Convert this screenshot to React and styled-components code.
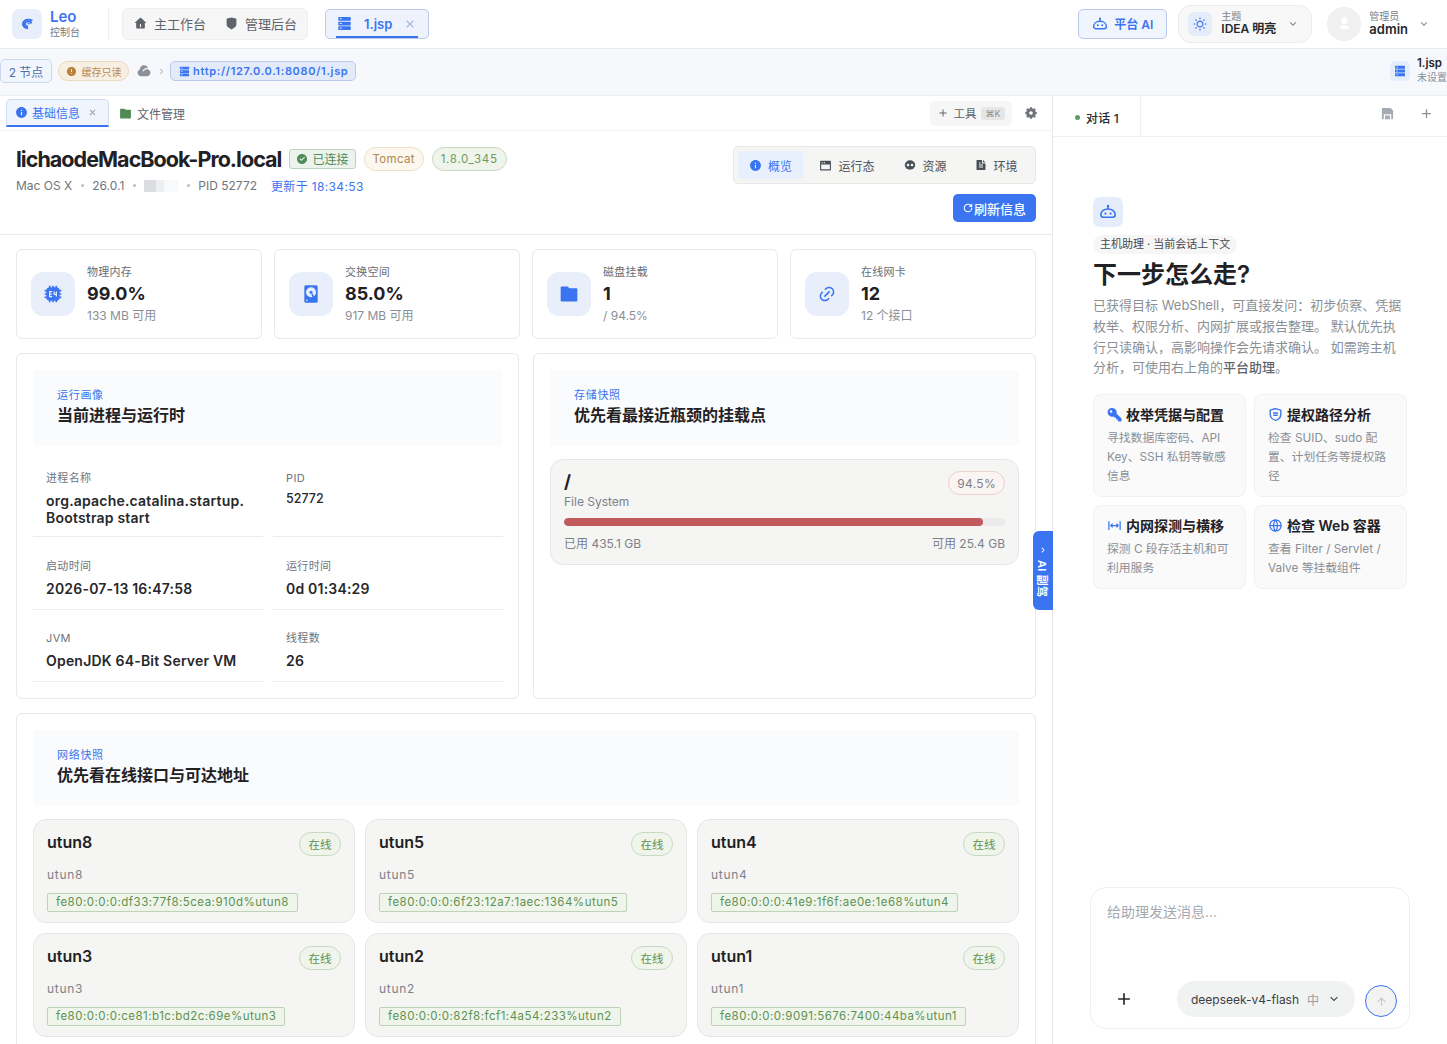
import React from "react";
import styled, { createGlobalStyle } from "styled-components";
import {
  RiHome4Fill, RiShieldFill, RiCloseLine, RiInformationFill, RiFolderFill,
  RiCloudFill, RiArrowRightSLine, RiArrowDownSLine, RiSettings5Fill, RiSaveFill, RiAddLine,
  RiCheckboxCircleFill, RiWindowFill, RiFileTextFill, RiSunLine,
  RiUser3Fill, RiArrowUpLine, RiLink, RiGlobalLine, RiErrorWarningFill,
} from "react-icons/ri";
import { RotateCw } from "lucide-react";

const BLUE = "#3b74f0";
const font = `Inter, "Noto Sans CJK SC", "Noto Sans", sans-serif`;

const GlobalStyle = createGlobalStyle`
  html, body { margin: 0; height: 100%; overflow: hidden; background: #fff; }
  body { font-family: ${font}; color: #1f2124; }
  * { box-sizing: border-box; }
`;

const RobotIcon = ({ size = 16 }) => (
  <svg width={size} height={size} viewBox="0 0 24 24" fill="none" stroke={BLUE} strokeWidth="2.2">
    <circle cx="12" cy="4" r="1.6" fill={BLUE} stroke="none" />
    <path d="M12 5v3" />
    <path d="M6 19c-2.2 0-3.6-1.4-3.6-3.3 0-4.4 4-7.7 9.6-7.7s9.6 3.3 9.6 7.7c0 1.9-1.4 3.3-3.6 3.3z" />
    <circle cx="8.6" cy="14" r="1.5" fill={BLUE} stroke="none" />
    <circle cx="15.4" cy="14" r="1.5" fill={BLUE} stroke="none" />
  </svg>
);

const LogoIcon = () => (
  <svg width="13" height="13" viewBox="0 0 24 24" fill="none" stroke={BLUE} strokeWidth="3.6">
    <path d="M21 7a11 9 0 0 0-17 3c-2 6 3 11 9 11" />
    <path d="M19 12a6 5 0 1 0-6 6" />
    <circle cx="14" cy="12" r="2" fill={BLUE} stroke="none" />
  </svg>
);

const ServerIcon = ({ size = 14, color = BLUE, hole = "#e8effb" }) => (
  <svg width={size} height={size} viewBox="0 0 24 24" style={{ flex: "none" }}>
    {[1.5, 9, 16.5].map((y) => (
      <g key={y}>
        <rect x="2" y={y} width="20" height="6" rx="1" fill={color} />
        <rect x="4.5" y={y + 2.2} width="3" height="1.6" fill={hole} />
      </g>
    ))}
  </svg>
);

const ChipIcon = () => (
  <svg width="20" height="20" viewBox="0 0 24 24">
    <path d="M7 2h2v2h2V2h2v2h2V2h2v2.2A3 3 0 0 1 19.8 7H22v2h-2v2h2v2h-2v2h2v2h-2.2A3 3 0 0 1 17 19.8V22h-2v-2h-2v2h-2v-2H9v2H7v-2.2A3 3 0 0 1 4.2 17H2v-2h2v-2H2v-2h2V9H2V7h2.2A3 3 0 0 1 7 4.2z" fill={BLUE} />
    <path d="M11 9H8v6h3M8 12h2.4M13.4 9v3.4h3M16 9v6" fill="none" stroke="#e8effb" strokeWidth="1.5" />
  </svg>
);

const HddIcon = () => (
  <svg width="20" height="20" viewBox="0 0 24 24">
    <rect x="4" y="1.5" width="16" height="21" rx="1.8" fill={BLUE} />
    <circle cx="12" cy="10" r="6" fill="#e8effb" />
    <circle cx="12" cy="10" r="1.8" fill={BLUE} />
    <path d="M13 12l3.5 6" stroke={BLUE} strokeWidth="1.8" />
    <circle cx="7" cy="19.5" r="1" fill="#e8effb" />
  </svg>
);

const PodIcon = () => (
  <svg width="12" height="12" viewBox="0 0 24 24">
    <ellipse cx="12" cy="12" rx="10.5" ry="9.5" fill="#4a5059" />
    <circle cx="8" cy="12" r="2.6" fill="#f5f5f4" />
    <circle cx="16" cy="12" r="2.6" fill="#f5f5f4" />
  </svg>
);

const KeyIcon = () => (
  <svg width="15" height="15" viewBox="0 0 24 24">
    <path fillRule="evenodd" fill={BLUE} d="M8.500 1.500a7 7 0 0 1 6.700 9l8 8v4.500h-4.700l-1.500-1.500v-2h-2.500v-2.500h-2l-2-2a7 7 0 1 1-2-13.500zM6.500 5a2 2 0 1 0 0 4 2 2 0 0 0 0-4z" />
  </svg>
);

const ShieldFaceIcon = () => (
  <svg width="15" height="15" viewBox="0 0 24 24" fill="none" stroke={BLUE} strokeWidth="2.2">
    <path d="M12 2.500l8.500 2.600v6.300c0 5-3.500 8.400-8.500 10.100-5-1.700-8.500-5.100-8.500-10.100V5.100z" />
    <path d="M8 9.500h8M8.500 13h7" strokeWidth="2.4" />
  </svg>
);

const SpanIcon = () => (
  <svg width="15" height="15" viewBox="0 0 24 24" fill="none" stroke={BLUE} strokeWidth="2">
    <path d="M3 5v14M21 5v14M6 12h12M9 9l-3 3 3 3M15 9l3 3-3 3" />
  </svg>
);

const Page = styled.div`
  width: 1447px;
  height: 1044px;
  display: flex;
  flex-direction: column;
  overflow: hidden;
  position: relative;
`;

/* top bar */
const TopBar = styled.header`
  height: 49px;
  flex: none;
  display: flex;
  align-items: center;
  padding: 0 17px 1px 12px;
  border-bottom: 1px solid #e9ebef;
`;

const LogoBox = styled.div`
  width: 30px;
  height: 30px;
  border-radius: 7px;
  background: #e8effb;
  display: flex;
  align-items: center;
  justify-content: center;
`;

const Brand = styled.div`
  margin-left: 8px;
  width: 59px;
  height: 32px;
  border-right: 1px solid #f0f0f0;
`;

const BrandName = styled.div`
  font-size: 15px;
  font-weight: 600;
  line-height: 17px;
  color: ${BLUE};
`;

const BrandSub = styled.div`
  font-size: 10px;
  line-height: 15px;
  color: #767b82;
`;

const NavGroup = styled.nav`
  margin-left: 13px;
  width: 186px;
  height: 32px;
  display: flex;
  align-items: center;
  gap: 19px;
  padding-left: 11px;
  background: #f6f6f6;
  border: 1px solid #eeeeee;
  border-radius: 6px;
`;

const NavItem = styled.div`
  display: flex;
  align-items: center;
  gap: 7px;
  font-size: 13px;
  color: #5f646b;
  svg { color: #5f646b; }
`;

const FileTab = styled.div`
  position: relative;
  margin-left: 17px;
  width: 104px;
  height: 30px;
  display: flex;
  align-items: center;
  padding-left: 11px;
  background: #edf2fc;
  border: 1px solid #b8c9ea;
  border-radius: 5px;
  color: ${BLUE};
  font-size: 13px;
  font-weight: 600;
  &::after {
    content: "";
    position: absolute;
    left: 10px;
    right: 10px;
    bottom: 0;
    height: 2px;
    background: ${BLUE};
  }
`;

const FileTabName = styled.span`
  margin: 0 11px 0 12px;
`;

const TopRight = styled.div`
  margin-left: auto;
  display: flex;
  align-items: center;
`;

const AiButton = styled.button`
  width: 89px;
  height: 30px;
  display: flex;
  align-items: center;
  justify-content: center;
  gap: 6px;
  font: 600 12px ${font};
  color: ${BLUE};
  background: #f0f4fd;
  border: 1px solid #b8c9ea;
  border-radius: 5px;
`;

const ThemePill = styled.div`
  margin-left: 11px;
  width: 134px;
  height: 38px;
  display: flex;
  align-items: center;
  padding: 0 12px 0 9px;
  background: #f8f8f8;
  border: 1px solid #ececec;
  border-radius: 13px;
`;

const ThemeIcon = styled.div`
  width: 24px;
  height: 24px;
  border-radius: 6px;
  background: #e5edfb;
  display: flex;
  align-items: center;
  justify-content: center;
  color: ${BLUE};
  margin-right: 9px;
`;

const SmallLabel = styled.div`
  font-size: 10px;
  line-height: 11px;
  color: #7d8289;
`;

const StrongValue = styled.div`
  font-size: ${(p) => p.$size || 12}px;
  font-weight: 600;
  line-height: 14px;
  color: #26282c;
`;

const Chevron = styled(RiArrowDownSLine)`
  margin-left: auto;
  color: #80858c;
`;

const UserChevron = styled(RiArrowDownSLine)`
  margin-left: 10px;
  color: #80858c;
`;

const Avatar = styled.div`
  margin-left: 15px;
  width: 34px;
  height: 34px;
  border-radius: 50%;
  background: #f0f0f0;
  display: flex;
  align-items: center;
  justify-content: center;
  color: #fff;
  margin-right: 8px;
`;

/* address bar */
const SubBar = styled.div`
  height: 47px;
  flex: none;
  display: flex;
  align-items: center;
  padding-bottom: 2px;
  background: #f6f8fc;
  border-bottom: 1px solid #eceef2;
`;

const NodeChip = styled.div`
  width: 52px;
  height: 24px;
  display: flex;
  align-items: center;
  justify-content: center;
  font-size: 12px;
  color: #4d6fae;
  background: #f1f5fd;
  border: 1px solid #c9d7ef;
  border-radius: 5px;
`;

const CacheBadge = styled.div`
  margin-left: 6px;
  width: 71px;
  height: 20px;
  display: flex;
  align-items: center;
  justify-content: center;
  gap: 5px;
  font-size: 10px;
  color: #bb8a4e;
  background: #f8efe3;
  border: 1px solid #edd9bf;
  border-radius: 10px;
`;

const Crumb = styled.div`
  display: flex;
  align-items: center;
  gap: 5px;
  margin-left: 8px;
  color: #8c9198;
  svg + svg { color: #b5b9bf; }
`;

const UrlChip = styled.div`
  margin-left: 3px;
  width: 186px;
  height: 20px;
  display: flex;
  align-items: center;
  gap: 3px;
  padding-left: 8px;
  font-size: 11px;
  font-weight: 600;
  letter-spacing: 0.68px;
  white-space: nowrap;
  color: ${BLUE};
  background: #e3ebfa;
  border: 1px solid #b8c9ea;
  border-radius: 5px;
`;

const TargetInfo = styled.div`
  margin-left: auto;
  width: 57px;
  display: flex;
  align-items: center;
  gap: 7px;
`;

const TargetIcon = styled.div`
  width: 20px;
  height: 20px;
  border-radius: 5px;
  background: #e6eefb;
  display: flex;
  align-items: center;
  justify-content: center;
  flex: none;
`;

const TargetText = styled.div`
  margin-top: -2px;
  white-space: nowrap;
  font-size: 11.5px;
  font-weight: 600;
  line-height: 14px;
  color: #26282c;
  small {
    display: block;
    margin-top: 1px;
    font-size: 10px;
    font-weight: 400;
    line-height: 13px;
    color: #8a8f96;
  }
`;

/* main area */
const Body = styled.div`
  flex: 1;
  min-height: 0;
  display: flex;
  position: relative;
`;

const LeftColumn = styled.main`
  width: 1053px;
  flex: none;
  border-right: 1px solid #e6e8ec;
  overflow: hidden;
`;

const TabRow = styled.div`
  height: 35px;
  display: flex;
  align-items: center;
  padding: 0 14px 0 6px;
  border-bottom: 1px solid #f2f3f5;
`;

const InfoTab = styled.div`
  width: 103px;
  height: 28px;
  display: flex;
  align-items: center;
  gap: 4px;
  padding-left: 8px;
  font-size: 12px;
  color: ${BLUE};
  background: #f0f4fd;
  border: 1px solid #cfdcf3;
  border-bottom: 2px solid ${BLUE};
  border-radius: 5px 5px 0 0;
`;

const TabClose = styled(RiCloseLine)`
  margin-left: 3px;
  color: #9aa0a8;
`;

const PlainTab = styled.div`
  margin-left: 10px;
  display: flex;
  align-items: center;
  gap: 5px;
  font-size: 12px;
  color: #5f646b;
  svg { color: #4f8a57; }
`;

const ToolButton = styled.div`
  margin-left: auto;
  width: 82px;
  height: 25px;
  display: flex;
  align-items: center;
  justify-content: center;
  gap: 4px;
  font-size: 11.5px;
  color: #5f646b;
  background: #f6f6f6;
  border-radius: 5px;
`;

const Kbd = styled.span`
  padding: 1px 4px;
  font-size: 9px;
  color: #8a8f96;
  background: #e6e6e6;
  border-radius: 3px;
  margin-left: 1px;
`;

const GearIcon = styled(RiSettings5Fill)`
  margin-left: 12px;
  color: #70757c;
`;

const HostHeader = styled.section`
  height: 104px;
  display: flex;
  justify-content: space-between;
  padding: 15px 16px 0 16px;
  border-bottom: 1px solid #e8e9ec;
`;

const TitleRow = styled.div`
  display: flex;
  align-items: center;
  gap: 8px;
  height: 25px;
`;

const HostName = styled.h1`
  margin: 0;
  font-size: 21.5px;
  font-weight: 700;
  letter-spacing: -0.96px;
  color: #1f2124;
`;

const ConnectedTag = styled.span`
  display: flex;
  align-items: center;
  gap: 4px;
  height: 20px;
  padding: 0 6px;
  font-size: 12px;
  color: #4f8a57;
  background: #ecf3ec;
  border: 1px solid #bcd3bf;
  border-radius: 3px;
`;

const RoundTag = styled.span`
  height: 24px;
  display: flex;
  align-items: center;
  padding: 0 8px;
  font-size: 11.5px;
  letter-spacing: ${(p) => p.$track}px;
  color: ${(p) => p.$color};
  background: ${(p) => p.$bg};
  border: 1px solid ${(p) => p.$line};
  border-radius: 12px;
`;

const MetaRow = styled.div`
  margin-top: 6px;
  display: flex;
  align-items: center;
  font-size: 12px;
  color: #70757c;
`;

const Dot = styled.span`
  width: 3px;
  height: 3px;
  margin: 0 8.5px;
  border-radius: 50%;
  background: #b9bcc1;
`;

const BlurBlock = styled.span`
  width: 34px;
  height: 12px;
  background: linear-gradient(90deg, #dcdde0 0 12px, #eceef0 12px 20px, #f8f9fb 20px);
`;

const UpdatedAt = styled.span`
  margin-left: 14px;
  letter-spacing: 0.35px;
  color: ${BLUE};
`;

const HeaderActions = styled.div`
  display: flex;
  flex-direction: column;
  align-items: flex-end;
  gap: 10px;
`;

const Segmented = styled.div`
  width: 303px;
  height: 38px;
  display: flex;
  align-items: center;
  padding: 0 4px;
  background: #f5f5f4;
  border: 1px solid #e8e8e8;
  border-radius: 5px;
`;

const Segment = styled.div`
  flex: none;
  display: flex;
  align-items: center;
  justify-content: center;
  gap: 6px;
  width: ${(p) => p.$w}px;
  height: 28px;
  font-size: 12px;
  border-radius: 4px;
  color: ${(p) => (p.$active ? BLUE : "#4a5059")};
  background: ${(p) => (p.$active ? "#e8f0fd" : "transparent")};
`;

const RefreshButton = styled.button`
  width: 83px;
  height: 28px;
  display: flex;
  align-items: center;
  justify-content: center;
  gap: 1px;
  padding: 0;
  font: 500 13px ${font};
  color: #fff;
  background: ${BLUE};
  border: 0;
  border-radius: 5px;
`;

const StatGrid = styled.div`
  display: grid;
  grid-template-columns: repeat(4, 246px);
  gap: 12px;
  padding: 14px 16px 0;
`;

const StatCard = styled.div`
  height: 90px;
  display: flex;
  align-items: center;
  gap: 12px;
  padding: 0 14px;
  border: 1px solid #e9e9e9;
  border-radius: 6px;
`;

const IconBox = styled.div`
  width: 44px;
  height: 44px;
  flex: none;
  display: flex;
  align-items: center;
  justify-content: center;
  border-radius: 12px;
  background: #e8effb;
  color: ${BLUE};
`;

const StatLabel = styled.div`
  font-size: 11px;
  line-height: 15px;
  letter-spacing: 0.25px;
  color: #696e75;
`;

const StatValue = styled.div`
  font-size: 18px;
  font-weight: 700;
  line-height: 28px;
  color: #1f2124;
`;

const StatSub = styled.div`
  font-size: 12px;
  line-height: 16px;
  color: #8a8f96;
`;

const PanelRow = styled.div`
  display: grid;
  grid-template-columns: 503px 503px;
  gap: 14px;
  padding: 14px 16px 0;
`;

const Panel = styled.section`
  height: 346px;
  padding: 16px;
  border: 1px solid #e9e9e9;
  border-radius: 6px;
`;

const WidePanel = styled(Panel)`
  height: auto;
  margin: 14px 0 0 16px;
  width: 1020px;
`;

const PanelHead = styled.div`
  height: 75px;
  padding: 18px 24px 0;
  background: #fafbfc;
  border-radius: 4px;
`;

const Kicker = styled.div`
  font-size: 11px;
  line-height: 14px;
  letter-spacing: 0.7px;
  color: ${BLUE};
`;

const PanelTitle = styled.h2`
  margin: 2px 0 0;
  font-size: 16px;
  font-weight: 600;
  line-height: 22px;
  color: #1f2124;
`;

const KvGrid = styled.dl`
  margin: 17px 0 0;
  display: grid;
  grid-template-columns: 230px 230px;
  grid-template-rows: 75px 73px 72px;
  column-gap: 10px;
`;

const KvCell = styled.div`
  padding: 9px 13px 0;
  border-bottom: 1px solid #ececec;
  &:nth-child(n + 3) { padding-top: 22px; }
  &:nth-child(n + 5) { padding-top: 21px; }
`;

const KvKey = styled.dt`
  font-size: 11px;
  line-height: 15px;
  letter-spacing: 0.35px;
  color: #6f747b;
`;

const KvValue = styled.dd`
  margin: ${(p) => (p.$compact ? 4 : 6)}px 0 0;
  font-size: ${(p) => (p.$compact ? 12.5 : 14)}px;
  font-weight: ${(p) => (p.$compact ? 500 : 600)};
  line-height: 17px;
  letter-spacing: ${(p) => (p.$compact ? 0 : 0.2)}px;
  color: #26282c;
`;

const MountCard = styled.div`
  margin-top: 14px;
  height: 106px;
  padding: 11px 13px;
  background: #f5f5f4;
  border: 1px solid #e6e6e6;
  border-radius: 13px;
`;

const MountTop = styled.div`
  display: flex;
  justify-content: space-between;
`;

const MountName = styled.div`
  font-size: 18px;
  font-weight: 700;
  line-height: 21px;
`;

const MountFs = styled.div`
  font-size: 12px;
  line-height: 19px;
  color: #7d8289;
`;

const PercentTag = styled.span`
  height: 24px;
  display: flex;
  align-items: center;
  padding: 0 8px;
  font-size: 12px;
  letter-spacing: 0.3px;
  color: #7d8289;
  background: #faf4f2;
  border: 1px solid #ecd0cc;
  border-radius: 12px;
`;

const BarTrack = styled.div`
  margin-top: 7px;
  height: 8px;
  border-radius: 4px;
  background: #ebebeb;
  overflow: hidden;
`;

const BarFill = styled.div`
  height: 100%;
  border-radius: 4px;
  background: #c25b5d;
`;

const MountFoot = styled.div`
  margin-top: 9px;
  display: flex;
  justify-content: space-between;
  font-size: 12px;
  line-height: 18px;
  color: #7d8289;
`;

const NetGrid = styled.div`
  margin-top: 14px;
  display: grid;
  grid-template-columns: repeat(3, 322px);
  gap: 10px;
`;

const NetCard = styled.div`
  height: 104px;
  padding: 12px 13px;
  background: #f5f5f4;
  border: 1px solid #e6e6e6;
  border-radius: 13px;
`;

const NetTop = styled.div`
  display: flex;
  justify-content: space-between;
`;

const NetName = styled.div`
  font-size: 16px;
  font-weight: 600;
  line-height: 20px;
  color: #1f2124;
`;

const OnlineTag = styled.span`
  width: 42px;
  height: 24px;
  display: flex;
  align-items: center;
  justify-content: center;
  font-size: 11.5px;
  color: #5d9152;
  background: #f0f5ec;
  border: 1px solid #c9d8c3;
  border-radius: 12px;
`;

const NetSub = styled.div`
  margin-top: 10px;
  font-size: 12px;
  line-height: 18px;
  letter-spacing: 0.7px;
  color: #7d8289;
`;

const AddrChip = styled.span`
  display: inline-block;
  margin-top: 9px;
  height: 19px;
  padding: 0 8px;
  font-size: 11.5px;
  line-height: 17px;
  letter-spacing: 0.48px;
  white-space: nowrap;
  color: #5d9152;
  background: #f0f5ec;
  border: 1px solid #bed2b7;
  border-radius: 2px;
`;

const SideHandle = styled.div`
  position: absolute;
  left: 1033px;
  top: 435px;
  width: 20px;
  height: 79px;
  display: flex;
  flex-direction: column;
  align-items: center;
  padding-top: 14px;
  color: #fff;
  font-size: 11px;
  font-weight: 600;
  background: ${BLUE};
  border-radius: 6px 0 0 6px;
`;

const HandleText = styled.span`
  margin-top: 5px;
  writing-mode: vertical-rl;
  text-orientation: sideways;
  letter-spacing: 0.3px;
  white-space: nowrap;
`;

/* assistant column */
const RightColumn = styled.aside`
  flex: 1;
  min-width: 0;
  display: flex;
  flex-direction: column;
`;

const ChatTabs = styled.div`
  height: 41px;
  flex: none;
  display: flex;
  align-items: stretch;
  padding: 0 13px 0 12px;
  border-bottom: 1px solid #f0f1f3;
`;

const ChatTab = styled.div`
  width: 76px;
  display: flex;
  align-items: center;
  gap: 6px;
  padding: 2px 0 0 10px;
  font-size: 12px;
  font-weight: 500;
  letter-spacing: 0.15px;
  color: #26282c;
  border-right: 1px solid #f0f1f3;
`;

const LiveDot = styled.span`
  width: 5px;
  height: 5px;
  border-radius: 50%;
  background: #5d9a68;
`;

const ChatActions = styled.div`
  margin-left: auto;
  display: flex;
  align-items: center;
  gap: 24px;
  padding-bottom: 6px;
  color: #a6abb1;
  svg + svg { color: #8a8f96; }
`;

const Welcome = styled.div`
  padding: 60px 40px 0;
`;

const BotBox = styled.div`
  width: 30px;
  height: 30px;
  display: flex;
  align-items: center;
  justify-content: center;
  border-radius: 7px;
  background: #e5edfb;
`;

const ContextPill = styled.div`
  display: inline-block;
  margin-top: 8px;
  height: 19px;
  padding: 0 7px;
  font-size: 11px;
  line-height: 19px;
  color: #46494e;
  background: #f6f6f6;
  border-radius: 10px;
`;

const WelcomeTitle = styled.h2`
  margin: 2px 0 0;
  font-size: 24px;
  font-weight: 600;
  line-height: 38px;
  color: #1f2124;
`;

const WelcomeText = styled.p`
  margin: 1px 0 0;
  font-size: 13px;
  line-height: 20.8px;
  color: #8a8f96;
`;

const WelcomeStrong = styled.span`
  font-weight: 500;
  color: #5f646b;
`;

const QuickGrid = styled.div`
  margin-top: 16px;
  display: grid;
  grid-template-columns: repeat(2, 153px);
  grid-template-rows: 103px 84px;
  gap: 8px;
`;

const QuickCard = styled.div`
  padding: 10px 13px 0;
  background: #fafafa;
  border: 1px solid #f1f1f1;
  border-radius: 8px;
`;

const QuickTitle = styled.div`
  display: flex;
  align-items: center;
  gap: 4px;
  font-size: 14px;
  font-weight: 600;
  line-height: 19px;
  white-space: nowrap;
  color: #1f2124;
  svg { color: ${BLUE}; flex: none; }
`;

const QuickText = styled.div`
  margin-top: 5px;
  font-size: 11.8px;
  line-height: 18.7px;
  color: #8a8f96;
`;

const Composer = styled.div`
  margin: auto 0 15px 37px;
  width: 320px;
  height: 142px;
  display: flex;
  flex-direction: column;
  padding: 15px 16px 11px;
  border: 1px solid #f0f0f0;
  border-radius: 16px;
`;

const Placeholder = styled.div`
  font-size: 14px;
  line-height: 18px;
  color: #a5a9af;
`;

const ComposerBar = styled.div`
  margin-top: auto;
  display: flex;
  align-items: flex-end;
  padding-left: 7px;
`;

const PlusWrap = styled.div`
  height: 36px;
  display: flex;
  align-items: center;
  color: #26282c;
`;

const ModelPill = styled.div`
  margin-left: auto;
  width: 178px;
  height: 36px;
  display: flex;
  align-items: center;
  justify-content: center;
  gap: 8px;
  font-size: 12px;
  color: #3c3f44;
  background: #f1f2f2;
  border-radius: 18px;
  span { font-size: 12px; color: #9a9ea4; }
`;

const SendButton = styled.button`
  margin-left: 10px;
  width: 32px;
  height: 32px;
  margin-right: -4px;
  display: flex;
  align-items: center;
  justify-content: center;
  padding: 0;
  color: #c3c6ca;
  background: #f3f3f4;
  border: 1px solid ${BLUE};
  border-radius: 50%;
`;

const stats = [
  { label: "物理内存", value: "99.0%", sub: "133 MB 可用", icon: <ChipIcon /> },
  { label: "交换空间", value: "85.0%", sub: "917 MB 可用", icon: <HddIcon /> },
  { label: "磁盘挂载", value: "1", sub: "/ 94.5%", icon: <RiFolderFill size={20} /> },
  { label: "在线网卡", value: "12", sub: "12 个接口", icon: <RiLink size={18} /> },
];

const runtime = [
  { key: "进程名称", value: <>org.apache.catalina.startup.<br />Bootstrap start</> },
  { key: "PID", value: "52772", compact: true },
  { key: "启动时间", value: "2026-07-13 16:47:58" },
  { key: "运行时间", value: "0d 01:34:29" },
  { key: "JVM", value: "OpenJDK 64-Bit Server VM" },
  { key: "线程数", value: "26" },
];

const interfaces = [
  { name: "utun8", addr: "fe80:0:0:0:df33:77f8:5cea:910d%utun8" },
  { name: "utun5", addr: "fe80:0:0:0:6f23:12a7:1aec:1364%utun5" },
  { name: "utun4", addr: "fe80:0:0:0:41e9:1f6f:ae0e:1e68%utun4" },
  { name: "utun3", addr: "fe80:0:0:0:ce81:b1c:bd2c:69e%utun3" },
  { name: "utun2", addr: "fe80:0:0:0:82f8:fcf1:4a54:233%utun2" },
  { name: "utun1", addr: "fe80:0:0:0:9091:5676:7400:44ba%utun1" },
];

const quickActions = [
  { title: "枚举凭据与配置", text: "寻找数据库密码、API Key、SSH 私钥等敏感信息", icon: <KeyIcon /> },
  { title: "提权路径分析", text: "检查 SUID、sudo 配置、计划任务等提权路径", icon: <ShieldFaceIcon /> },
  { title: "内网探测与横移", text: "探测 C 段存活主机和可利用服务", icon: <SpanIcon /> },
  { title: "检查 Web 容器", text: "查看 Filter / Servlet / Valve 等挂载组件", icon: <RiGlobalLine size={15} /> },
];

const App = () => (
  <Page>
    <GlobalStyle />
    <TopBar>
      <LogoBox><LogoIcon /></LogoBox>
      <Brand>
        <BrandName>Leo</BrandName>
        <BrandSub>控制台</BrandSub>
      </Brand>
      <NavGroup>
        <NavItem><RiHome4Fill size={13} />主工作台</NavItem>
        <NavItem><RiShieldFill size={13} />管理后台</NavItem>
      </NavGroup>
      <FileTab>
        <ServerIcon size={15} hole="#edf2fc" />
        <FileTabName>1.jsp</FileTabName>
        <RiCloseLine size={14} color="#9db3dc" />
      </FileTab>
      <TopRight>
        <AiButton><RobotIcon />平台 AI</AiButton>
        <ThemePill>
          <ThemeIcon><RiSunLine size={14} /></ThemeIcon>
          <div>
            <SmallLabel>主题</SmallLabel>
            <StrongValue>IDEA 明亮</StrongValue>
          </div>
          <Chevron size={12} />
        </ThemePill>
        <Avatar><RiUser3Fill size={13} /></Avatar>
        <div>
          <SmallLabel>管理员</SmallLabel>
          <StrongValue $size={13}>admin</StrongValue>
        </div>
        <UserChevron size={12} />
      </TopRight>
    </TopBar>

    <SubBar>
      <NodeChip>2 节点</NodeChip>
      <CacheBadge><RiErrorWarningFill size={11} color="#b9823c" />缓存只读</CacheBadge>
      <Crumb>
        <RiCloudFill size={14} />
        <RiArrowRightSLine size={11} />
      </Crumb>
      <UrlChip><ServerIcon size={11} hole="#e3ebfa" />http://127.0.0.1:8080/1.jsp</UrlChip>
      <TargetInfo>
        <TargetIcon><ServerIcon size={12} hole="#e6eefb" /></TargetIcon>
        <TargetText>1.jsp<small>未设置</small></TargetText>
      </TargetInfo>
    </SubBar>

    <Body>
      <LeftColumn>
        <TabRow>
          <InfoTab>
            <RiInformationFill size={13} />基础信息
            <TabClose size={11} />
          </InfoTab>
          <PlainTab><RiFolderFill size={13} />文件管理</PlainTab>
          <ToolButton><RiAddLine size={12} />工具<Kbd>⌘K</Kbd></ToolButton>
          <GearIcon size={14} />
        </TabRow>

        <HostHeader>
          <div>
            <TitleRow>
              <HostName>lichaodeMacBook-Pro.local</HostName>
              <ConnectedTag><RiCheckboxCircleFill size={12} />已连接</ConnectedTag>
              <RoundTag $track={0.3} $color="#b0884f" $bg="#fcf7ef" $line="#eedfc8">Tomcat</RoundTag>
              <RoundTag $track={0.7} $color="#6c9a5f" $bg="#f0f5ec" $line="#c9d8c3">1.8.0_345</RoundTag>
            </TitleRow>
            <MetaRow>
              Mac OS X<Dot />26.0.1<Dot /><BlurBlock /><Dot />PID 52772
              <UpdatedAt>更新于 18:34:53</UpdatedAt>
            </MetaRow>
          </div>
          <HeaderActions>
            <Segmented>
              <Segment $w={65} $active><RiInformationFill size={13} />概览</Segment>
              <Segment $w={88}><RiWindowFill size={13} />运行态</Segment>
              <Segment $w={69}><PodIcon />资源</Segment>
              <Segment $w={73}><RiFileTextFill size={12} />环境</Segment>
            </Segmented>
            <RefreshButton><RotateCw size={10} strokeWidth={2.6} />刷新信息</RefreshButton>
          </HeaderActions>
        </HostHeader>

        <StatGrid>
          {stats.map((s) => (
            <StatCard key={s.label}>
              <IconBox>{s.icon}</IconBox>
              <div>
                <StatLabel>{s.label}</StatLabel>
                <StatValue>{s.value}</StatValue>
                <StatSub>{s.sub}</StatSub>
              </div>
            </StatCard>
          ))}
        </StatGrid>

        <PanelRow>
          <Panel>
            <PanelHead>
              <Kicker>运行画像</Kicker>
              <PanelTitle>当前进程与运行时</PanelTitle>
            </PanelHead>
            <KvGrid>
              {runtime.map((r) => (
                <KvCell key={r.key}>
                  <KvKey>{r.key}</KvKey>
                  <KvValue $compact={r.compact}>{r.value}</KvValue>
                </KvCell>
              ))}
            </KvGrid>
          </Panel>
          <Panel>
            <PanelHead>
              <Kicker>存储快照</Kicker>
              <PanelTitle>优先看最接近瓶颈的挂载点</PanelTitle>
            </PanelHead>
            <MountCard>
              <MountTop>
                <div>
                  <MountName>/</MountName>
                  <MountFs>File System</MountFs>
                </div>
                <PercentTag>94.5%</PercentTag>
              </MountTop>
              <BarTrack><BarFill style={{ width: "95%" }} /></BarTrack>
              <MountFoot>
                <span>已用 435.1 GB</span>
                <span>可用 25.4 GB</span>
              </MountFoot>
            </MountCard>
          </Panel>
        </PanelRow>

        <WidePanel>
          <PanelHead>
            <Kicker>网络快照</Kicker>
            <PanelTitle>优先看在线接口与可达地址</PanelTitle>
          </PanelHead>
          <NetGrid>
            {interfaces.map((n) => (
              <NetCard key={n.name}>
                <NetTop>
                  <NetName>{n.name}</NetName>
                  <OnlineTag>在线</OnlineTag>
                </NetTop>
                <NetSub>{n.name}</NetSub>
                <AddrChip>{n.addr}</AddrChip>
              </NetCard>
            ))}
          </NetGrid>
        </WidePanel>
      </LeftColumn>

      <SideHandle>
        <RiArrowRightSLine size={10} />
        <HandleText>AI 副驾</HandleText>
      </SideHandle>

      <RightColumn>
        <ChatTabs>
          <ChatTab><LiveDot />对话 1</ChatTab>
          <ChatActions>
            <RiSaveFill size={15} />
            <RiAddLine size={15} />
          </ChatActions>
        </ChatTabs>
        <Welcome>
          <BotBox><RobotIcon size={18} /></BotBox>
          <ContextPill>主机助理 · 当前会话上下文</ContextPill>
          <WelcomeTitle>下一步怎么走?</WelcomeTitle>
          <WelcomeText>
            已获得目标 WebShell，可直接发问：初步侦察、凭据枚举、权限分析、内网扩展或报告整理。 默认优先执行只读确认，高影响操作会先请求确认。 如需跨主机分析，可使用右上角的<WelcomeStrong>平台助理</WelcomeStrong>。
          </WelcomeText>
          <QuickGrid>
            {quickActions.map((q) => (
              <QuickCard key={q.title}>
                <QuickTitle>{q.icon}{q.title}</QuickTitle>
                <QuickText>{q.text}</QuickText>
              </QuickCard>
            ))}
          </QuickGrid>
        </Welcome>
        <Composer>
          <Placeholder>给助理发送消息...</Placeholder>
          <ComposerBar>
            <PlusWrap><RiAddLine size={20} /></PlusWrap>
            <ModelPill>
              deepseek-v4-flash <span>中</span>
              <RiArrowDownSLine size={14} />
            </ModelPill>
            <SendButton><RiArrowUpLine size={13} /></SendButton>
          </ComposerBar>
        </Composer>
      </RightColumn>
    </Body>
  </Page>
);

export default App;
